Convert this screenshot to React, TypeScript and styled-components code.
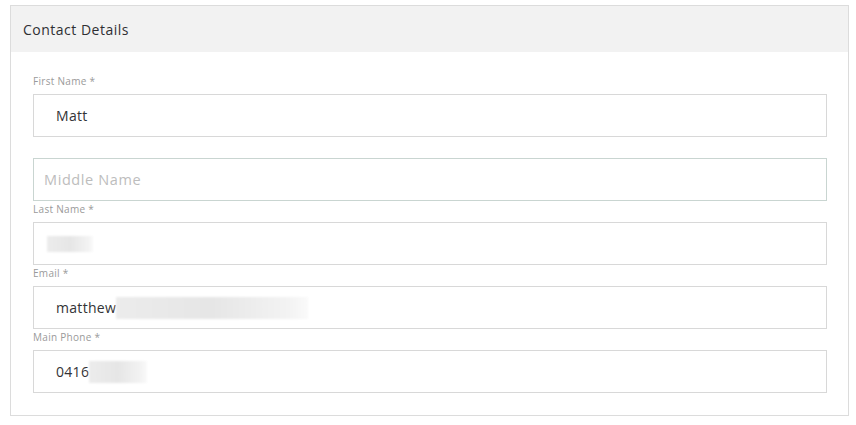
import React from "react";
import styled, { createGlobalStyle } from "styled-components";

const Global = createGlobalStyle`
  body {
    margin: 0;
    background: #ffffff;
    font-family: "Open Sans", "Liberation Sans", sans-serif;
  }
`;

const Page = styled.div`
  padding: 5px 7px 0 10px;
`;

const Card = styled.section`
  border: 1px solid #dcdcdc;
  background: #ffffff;
`;

const CardHeader = styled.header`
  height: 46px;
  background: #f2f2f2;
  display: flex;
  align-items: center;
  padding-left: 12px;
  font-size: 14px;
  letter-spacing: 0.5px;
  color: #2f2f33;
`;

const CardBody = styled.div`
  padding: 21px 21px 22px 22px;
  display: flex;
  flex-direction: column;
`;

const Field = styled.div`
  display: flex;
  flex-direction: column;
`;

const Label = styled.div`
  height: 21px;
  font-size: 10px;
  line-height: 16px;
  letter-spacing: 0.3px;
  color: #9a9a9a;
`;

const InputBox = styled.div<{ $placeholder?: boolean }>`
  height: 43px;
  box-sizing: border-box;
  border: 1px solid ${(p) => (p.$placeholder ? "#c9d5d1" : "#d8d8d8")};
  display: flex;
  align-items: center;
  padding-left: ${(p) => (p.$placeholder ? "10px" : "22px")};
  font-size: ${(p) => (p.$placeholder ? "14.5px" : "14px")};
  letter-spacing: ${(p) => (p.$placeholder ? "0.6px" : "0.3px")};
  color: ${(p) => (p.$placeholder ? "#bdbdbd" : "#333336")};
`;

const Redacted = styled.span<{ $w: number; $h: number }>`
  display: inline-block;
  width: ${(p) => p.$w}px;
  height: ${(p) => p.$h}px;
  background: linear-gradient(90deg, #ececec 0%, #e6e6e6 50%, #f3f3f3 90%, #fafafa 100%);
  filter: blur(1px);
`;

export default function App() {
  return (
    <Page>
      <Global />
      <Card>
        <CardHeader>Contact Details</CardHeader>
        <CardBody>
          <Field>
            <Label>First Name *</Label>
            <InputBox>Matt</InputBox>
          </Field>
          <Field>
            <Label />
            <InputBox $placeholder>Middle Name</InputBox>
          </Field>
          <Field>
            <Label>Last Name *</Label>
            <InputBox style={{ paddingLeft: 13 }}>
              <Redacted $w={46} $h={16} />
            </InputBox>
          </Field>
          <Field>
            <Label>Email *</Label>
            <InputBox>
              matthew
              <Redacted $w={192} $h={22} />
            </InputBox>
          </Field>
          <Field>
            <Label>Main Phone *</Label>
            <InputBox>
              0416
              <Redacted $w={58} $h={22} />
            </InputBox>
          </Field>
        </CardBody>
      </Card>
    </Page>
  );
}
